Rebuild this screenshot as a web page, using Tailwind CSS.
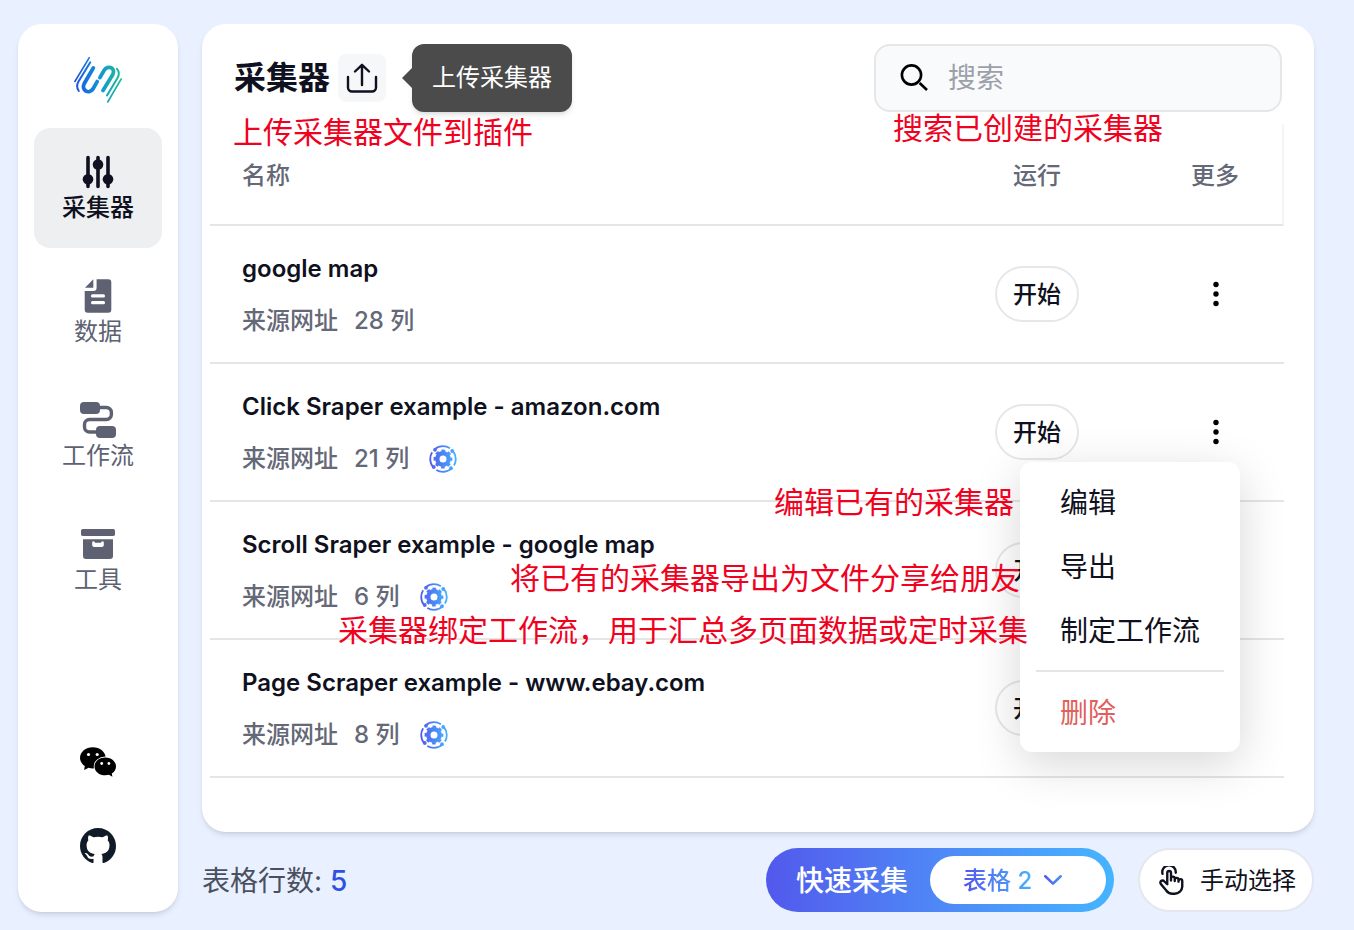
<!DOCTYPE html>
<html lang="zh-CN">
<head>
    <meta charset="UTF-8">
    <meta name="viewport" content="width=device-width, initial-scale=1.0">
    <title>采集器</title>
    <script src="https://cdn.jsdelivr.net/npm/@tailwindcss/browser@4"></script>
</head>
<body class="bg-[#e9f0ff] text-[#0f1120] font-['Inter','Noto_Sans_CJK_SC',sans-serif]">
    <!-- shared gradient and icons for the table rows -->
    <svg class="absolute w-0 h-0" aria-hidden="true">
        <defs>
            <linearGradient id="blue" x1="0" y1="0" x2="28" y2="0" gradientUnits="userSpaceOnUse">
                <stop offset="0" stop-color="#5258ec"/>
                <stop offset="1" stop-color="#45b4ff"/>
            </linearGradient>
            <symbol id="gear" viewBox="0 0 28 28">
                <g fill="none" stroke="url(#blue)">
                    <circle cx="14" cy="14" r="12.8" stroke-width="1.8" stroke-dasharray="16.2 3.9" stroke-dashoffset="-10.8"/>
                    <circle cx="14" cy="14" r="5.7" stroke-width="4.4"/>
                    <circle cx="14" cy="14" r="8.3" stroke-width="2.2" stroke-dasharray="3.6 2.92" stroke-dashoffset="1.8"/>
                </g>
                <g fill="url(#blue)">
                    <circle cx="6" cy="4.8" r="1.9"/>
                    <circle cx="23.2" cy="6" r="1.9"/>
                    <circle cx="22" cy="23.2" r="1.9"/>
                    <circle cx="4.8" cy="22" r="1.9"/>
                </g>
            </symbol>
            <symbol id="dots" viewBox="0 0 28 28">
                <circle cx="14" cy="4.5" r="2.7"/>
                <circle cx="14" cy="14" r="2.7"/>
                <circle cx="14" cy="23.5" r="2.7"/>
            </symbol>
        </defs>
    </svg>

    <div class="flex gap-6 min-h-screen pt-6 pb-[18px] pl-[18px] pr-10">
        <aside class="flex flex-col items-center w-40 shrink-0 pt-8 pb-12 bg-white rounded-3xl shadow-md">
            <svg class="w-12 h-12 mb-6" viewBox="0 0 48 48" fill="none" stroke="url(#logo)" stroke-linecap="round" role="img" aria-label="Logo">
                <defs>
                    <linearGradient id="logo" x1="0" y1="0" x2="48" y2="0" gradientUnits="userSpaceOnUse">
                        <stop offset="0" stop-color="#1e4fe0"/>
                        <stop offset=".5" stop-color="#1292d8"/>
                        <stop offset="1" stop-color="#1fbf8f"/>
                    </linearGradient>
                </defs>
                <path stroke-width="1.6" d="M15.3 1.7L.9 25.5"/>
                <path stroke-width="2" d="M16.3 6.3L4.5 25.5Q1.5 30.5 4.8 35"/>
                <path stroke-width="3.8" d="M19.3 12L10.3 27.5C7 34 14.5 39 19 33L23.2 25.6"/>
                <path stroke-width="3.8" d="M25.9 21.6L30 14.5C34 8.5 42 12 38.8 18.5L29 34.5"/>
                <path stroke-width="2" d="M43 12.8Q46.5 17 43.5 22L33 39.5"/>
                <path stroke-width="1.6" d="M47.2 23L33.7 46"/>
            </svg>

            <nav class="flex flex-col gap-1 w-32 text-2xl leading-8 text-[#5d6172]">
                <a href="#" class="flex flex-col items-center justify-center h-[120px] rounded-2xl bg-[#edeff1] text-[#0f1120] font-medium">
                    <svg class="w-10 h-10" viewBox="0 0 40 40" fill="currentColor" stroke="currentColor" stroke-width="3.6" stroke-linecap="round">
                        <path d="M10 5.5V34.5M20 5.5V34.5M30 5.5V34.5"/>
                        <g stroke="none">
                            <circle cx="10" cy="27.3" r="5.3"/>
                            <circle cx="20" cy="12.5" r="5.3"/>
                            <circle cx="30" cy="27.3" r="5.3"/>
                        </g>
                    </svg>
                    采集器
                </a>
                <a href="#" class="flex flex-col items-center justify-center h-[120px] rounded-2xl">
                    <svg class="w-10 h-10" viewBox="0 0 40 40" fill="currentColor">
                        <path d="M15.3 3.3V11.7H7Z"/>
                        <path fill-rule="evenodd" d="M18.6 3.3H30.3A3 3 0 0 1 33.3 6.3V33.7A3 3 0 0 1 30.3 36.7H9.7A3 3 0 0 1 6.7 33.7V15H15.3A3.3 3.3 0 0 0 18.6 11.7ZM14.6 18.3A1.6 1.6 0 0 0 14.6 21.6H25.4A1.6 1.6 0 0 0 25.4 18.3ZM14.6 25A1.6 1.6 0 0 0 14.6 28.3H25.4A1.6 1.6 0 0 0 25.4 25Z"/>
                    </svg>
                    数据
                </a>
                <a href="#" class="flex flex-col items-center justify-center h-[120px] rounded-2xl">
                    <svg class="w-10 h-10" viewBox="0 0 40 40" fill="currentColor">
                        <path fill="none" stroke="currentColor" stroke-width="3.4" d="M20 7.5H28A5 5 0 0 1 33.4 12.5V14.5A5 5 0 0 1 28.4 19.5H11.5A5 5 0 0 0 6.5 24.5V27A5 5 0 0 0 11.5 32H20"/>
                        <rect x="2" y="2" width="20" height="12" rx="4"/>
                        <rect x="18" y="26" width="20" height="12" rx="4"/>
                    </svg>
                    工作流
                </a>
                <a href="#" class="flex flex-col items-center justify-center h-[120px] rounded-2xl">
                    <svg class="w-10 h-10" viewBox="0 0 40 40" fill="currentColor">
                        <rect x="3" y="5" width="34" height="7" rx="1.8"/>
                        <path fill-rule="evenodd" d="M5 15.3H35V32A3 3 0 0 1 32 35H8A3 3 0 0 1 5 32ZM15.5 17.2Q14.2 17.2 14.2 18.5V21Q14.2 23 16.2 23H23.8Q25.8 23 25.8 21V18.5Q25.8 17.2 24.5 17.2Q23.2 17.2 23 18.8H17Q16.8 17.2 15.5 17.2Z"/>
                    </svg>
                    工具
                </a>
            </nav>

            <div class="flex flex-col gap-12 mt-auto">
                <a href="#" aria-label="WeChat">
                    <svg class="w-9 h-9" viewBox="0 0 36 36">
                        <path d="M12.8 3.2C5.7 3.2 0 7.9 0 13.8C0 17.1 1.8 20 4.8 22L4.1 26L8.6 23.8C10 24.2 11.4 24.4 12.8 24.4C19.9 24.4 25.7 19.7 25.7 13.8S19.9 3.2 12.8 3.2Z"/>
                        <path stroke="#fff" stroke-width="1.6" paint-order="stroke" d="M25.3 13.4C19.3 13.4 14.5 17.4 14.5 22.4S19.3 31.3 25.3 31.3C26.6 31.3 27.8 31.1 29 30.8L32.4 32.8L31.8 29.6C34.4 27.9 36 25.3 36 22.4C36 17.4 31.2 13.4 25.3 13.4Z"/>
                        <g fill="#fff">
                            <circle cx="8.5" cy="10.5" r="1.6"/>
                            <circle cx="17.2" cy="10.5" r="1.6"/>
                            <circle cx="21.7" cy="19.5" r="1.4"/>
                            <circle cx="28.9" cy="19.5" r="1.4"/>
                        </g>
                    </svg>
                </a>
                <a href="#" aria-label="GitHub">
                    <svg class="w-9 h-9" viewBox="0 0 16 16" fill="#111b27">
                        <path d="M8 0C3.58 0 0 3.58 0 8c0 3.54 2.29 6.53 5.47 7.59.4.07.55-.17.55-.38 0-.19-.01-.82-.01-1.49-2.01.37-2.53-.49-2.69-.94-.09-.23-.48-.94-.82-1.13-.28-.15-.68-.52-.01-.53.63-.01 1.08.58 1.23.82.72 1.21 1.87.87 2.33.66.07-.52.28-.87.51-1.07-1.78-.2-3.64-.89-3.64-3.95 0-.87.31-1.59.82-2.15-.08-.2-.36-1.02.08-2.12 0 0 .67-.21 2.2.82.64-.18 1.32-.27 2-.27s1.36.09 2 .27c1.53-1.04 2.2-.82 2.2-.82.44 1.1.16 1.92.08 2.12.51.56.82 1.27.82 2.15 0 3.07-1.87 3.75-3.65 3.95.29.25.54.73.54 1.48 0 1.07-.01 1.93-.01 2.2 0 .21.15.46.55.38A8.01 8.01 0 0 0 16 8c0-4.42-3.58-8-8-8Z"/>
                    </svg>
                </a>
            </div>
        </aside>

        <div class="flex flex-col gap-4 flex-1 min-w-0">
            <main class="relative flex-1 bg-white rounded-3xl shadow-md pt-5">
                <header class="flex items-center justify-between px-8">
                    <div class="flex items-center gap-2">
                        <h1 class="text-[32px] leading-10 font-semibold whitespace-nowrap">采集器</h1>
                        <div class="relative">
                            <button class="block rounded-lg bg-[#f5f7f8] cursor-pointer" aria-label="上传采集器">
                                <svg class="w-12 h-12" viewBox="0 0 48 48" fill="none" stroke="currentColor" stroke-width="2.4" stroke-linecap="round" stroke-linejoin="round">
                                    <path d="M10 23V33.5A4 4 0 0 0 14 37.5H34A4 4 0 0 0 38 33.5V23M24 31V11M17 17.5L24 10.8L31 17.5"/>
                                </svg>
                            </button>
                            <div class="absolute left-full top-1/2 -translate-y-1/2 ml-[26px] px-5 h-[68px] flex items-center rounded-xl bg-[#4b4b4b] text-white text-2xl whitespace-nowrap shadow-md">
                                <svg class="absolute right-full w-[10px] h-5" viewBox="0 0 10 20" fill="#4b4b4b"><path d="M10 0V20L0 10Z"/></svg>
                                上传采集器
                            </div>
                        </div>
                    </div>
                    <label class="flex items-center gap-5 w-[408px] h-[68px] px-6 border-2 border-[#e5e7e9] rounded-2xl bg-[#f9fafc]">
                        <svg class="w-7 h-7 shrink-0" viewBox="0 0 28 28" fill="none" stroke="#000" stroke-width="2.6">
                            <circle cx="11.5" cy="11" r="9.6"/>
                            <path d="M19.6 19L27 26"/>
                        </svg>
                        <input type="search" aria-label="搜索" placeholder="搜索" class="flex-1 min-w-0 text-[28px] leading-10 outline-none placeholder:text-[#9ca0a9]">
                    </label>
                </header>

                <div class="mt-3 ml-2 mr-[30px]">
                    <table class="w-full table-fixed border-separate border-spacing-0 text-2xl leading-8 font-medium">
                        <thead class="text-[#646877]">
                            <tr class="h-[102px]">
                                <th class="pt-1 pl-8 text-left font-medium border-b-2 border-[#e5e5e5]">名称</th>
                                <th class="pt-1 w-[222px] font-medium border-b-2 border-[#e5e5e5]">运行</th>
                                <th class="pt-1 w-[136px] font-medium border-b-2 border-b-[#e5e5e5] border-r-2 border-r-[#f5f5f5]">更多</th>
                            </tr>
                        </thead>
                        <tbody>
                            <tr class="h-[138px]">
                                <td class="pt-0.5 pl-8 border-b-2 border-[#e5e5e5]">
                                    <div class="flex flex-col gap-5">
                                        <span class="font-semibold">google map</span>
                                        <span class="flex items-center gap-4 text-[#646877]"><a href="#">来源网址</a><span>28 列</span></span>
                                    </div>
                                </td>
                                <td class="text-center border-b-2 border-[#e5e5e5]">
                                    <button class="w-[84px] h-14 pt-0.5 rounded-full border-2 border-[#e5e7e9] bg-white font-medium cursor-pointer">开始</button>
                                </td>
                                <td class="border-b-2 border-[#e5e5e5]">
                                    <button class="block mx-auto cursor-pointer" aria-label="更多"><svg class="w-7 h-7"><use href="#dots"/></svg></button>
                                </td>
                            </tr>
                            <tr class="h-[138px]">
                                <td class="pt-0.5 pl-8 border-b-2 border-[#e5e5e5]">
                                    <div class="flex flex-col gap-5">
                                        <span class="font-semibold">Click Sraper example - amazon.com</span>
                                        <span class="flex items-center gap-4 text-[#646877]"><a href="#">来源网址</a><span>21 列</span><svg class="w-7 h-7 ml-1"><use href="#gear"/></svg></span>
                                    </div>
                                </td>
                                <td class="text-center border-b-2 border-[#e5e5e5]">
                                    <button class="w-[84px] h-14 pt-0.5 rounded-full border-2 border-[#e5e7e9] bg-white font-medium cursor-pointer">开始</button>
                                </td>
                                <td class="relative border-b-2 border-[#e5e5e5]">
                                    <button class="block mx-auto cursor-pointer" aria-label="更多"><svg class="w-7 h-7"><use href="#dots"/></svg></button>
                                    <div class="absolute z-10 right-11 top-[98px] w-[220px] py-2 bg-white rounded-xl shadow-[0_12px_48px_rgba(0,0,0,0.16)] text-[28px] font-normal">
                                        <button class="block w-full h-16 pt-0.5 px-10 text-left cursor-pointer">编辑</button>
                                        <button class="block w-full h-16 pt-0.5 px-10 text-left cursor-pointer">导出</button>
                                        <button class="block w-full h-16 pt-0.5 px-10 text-left whitespace-nowrap cursor-pointer">制定工作流</button>
                                        <hr class="mx-4 my-2 border-t-2 border-[#e5e5e5]">
                                        <button class="block w-full h-16 pt-0.5 px-10 text-left text-[#e0605c] cursor-pointer">删除</button>
                                    </div>
                                </td>
                            </tr>
                            <tr class="h-[138px]">
                                <td class="pt-0.5 pl-8 border-b-2 border-[#e5e5e5]">
                                    <div class="flex flex-col gap-5">
                                        <span class="font-semibold">Scroll Sraper example - google map</span>
                                        <span class="flex items-center gap-4 text-[#646877]"><a href="#">来源网址</a><span>6 列</span><svg class="w-7 h-7 ml-1"><use href="#gear"/></svg></span>
                                    </div>
                                </td>
                                <td class="text-center border-b-2 border-[#e5e5e5]">
                                    <button class="w-[84px] h-14 pt-0.5 rounded-full border-2 border-[#e5e7e9] bg-white font-medium cursor-pointer">开始</button>
                                </td>
                                <td class="border-b-2 border-[#e5e5e5]">
                                    <button class="block mx-auto cursor-pointer" aria-label="更多"><svg class="w-7 h-7"><use href="#dots"/></svg></button>
                                </td>
                            </tr>
                            <tr class="h-[138px]">
                                <td class="pt-0.5 pl-8 border-b-2 border-[#e5e5e5]">
                                    <div class="flex flex-col gap-5">
                                        <span class="font-semibold">Page Scraper example - www.ebay.com</span>
                                        <span class="flex items-center gap-4 text-[#646877]"><a href="#">来源网址</a><span>8 列</span><svg class="w-7 h-7 ml-1"><use href="#gear"/></svg></span>
                                    </div>
                                </td>
                                <td class="text-center border-b-2 border-[#e5e5e5]">
                                    <button class="w-[84px] h-14 pt-0.5 rounded-full border-2 border-[#e5e7e9] bg-white font-medium cursor-pointer">开始</button>
                                </td>
                                <td class="border-b-2 border-[#e5e5e5]">
                                    <button class="block mx-auto cursor-pointer" aria-label="更多"><svg class="w-7 h-7"><use href="#dots"/></svg></button>
                                </td>
                            </tr>
                        </tbody>
                    </table>
                </div>

                <!-- red notes on top of everything -->
                <div class="text-[30px] leading-10 text-[#f0021f] whitespace-nowrap">
                    <p class="absolute z-20 left-[31px] top-[88px]">上传采集器文件到插件</p>
                    <p class="absolute z-20 right-[151px] top-[84px]">搜索已创建的采集器</p>
                    <p class="absolute z-20 right-[300px] top-[458px]">编辑已有的采集器</p>
                    <p class="absolute z-20 right-[294px] top-[534px]">将已有的采集器导出为文件分享给朋友</p>
                    <p class="absolute z-20 right-[286px] top-[586px]">采集器绑定工作流，用于汇总多页面数据或定时采集</p>
                </div>
            </main>

            <footer class="flex items-center h-16">
                <p class="pt-0.5 text-[28px] leading-10 text-[#4b5060]">表格行数: <span class="text-[#2f50e0] font-medium">5</span></p>
                <div class="flex items-center h-16 ml-auto pr-2 rounded-full bg-linear-to-r from-[#5258ec] to-[#45b4ff]">
                    <button class="h-16 pt-0.5 pl-[30px] pr-[22px] text-[28px] font-medium text-white cursor-pointer">快速采集</button>
                    <div class="relative w-44 h-12 rounded-full bg-white">
                        <select aria-label="表格" class="w-full h-12 pt-0.5 pl-[33px] appearance-none outline-none text-2xl font-medium text-transparent bg-linear-to-r from-[#5258ec] from-20% to-[#45b4ff] to-60% bg-clip-text">
                            <option class="text-black">表格 2</option>
                        </select>
                        <svg class="absolute right-11 top-[19px] w-[18px] h-[10px] pointer-events-none" viewBox="0 0 18 10" fill="none" stroke="url(#blue)" stroke-width="2.6" stroke-linecap="round" stroke-linejoin="round">
                            <path d="M1.3 1.3L9 8.6L16.7 1.3"/>
                        </svg>
                    </div>
                </div>
                <button class="flex items-center gap-3 h-16 ml-6 pt-0.5 pl-[18px] pr-4 rounded-full border-2 border-[#e5e7ee] bg-white text-2xl cursor-pointer">
                    <svg class="w-[30px] h-[30px]" viewBox="0 0 24 24" fill="none" stroke="currentColor" stroke-width="1.9" stroke-linecap="round" stroke-linejoin="round">
                        <path d="M7.4 14V5.5A1.5 1.5 0 0 1 10.4 5.5V11.5M10.4 11.5V10A1.5 1.5 0 0 1 13.4 10V12M13.4 11A1.5 1.5 0 0 1 16.4 11V12.5M16.4 12A1.5 1.5 0 0 1 19.4 12V16.5A6 6 0 0 1 13.4 22.2H11.6A6 6 0 0 1 6.6 19.6C5.2 17.9 3.6 16.2 2.3 14.4A1.5 1.5 0 0 1 4.9 12.2L7.4 14.6M3.6 6.2A5.4 5.4 0 1 1 14.2 5.4"/>
                    </svg>
                    手动选择
                </button>
            </footer>
        </div>
    </div>
</body>
</html>
